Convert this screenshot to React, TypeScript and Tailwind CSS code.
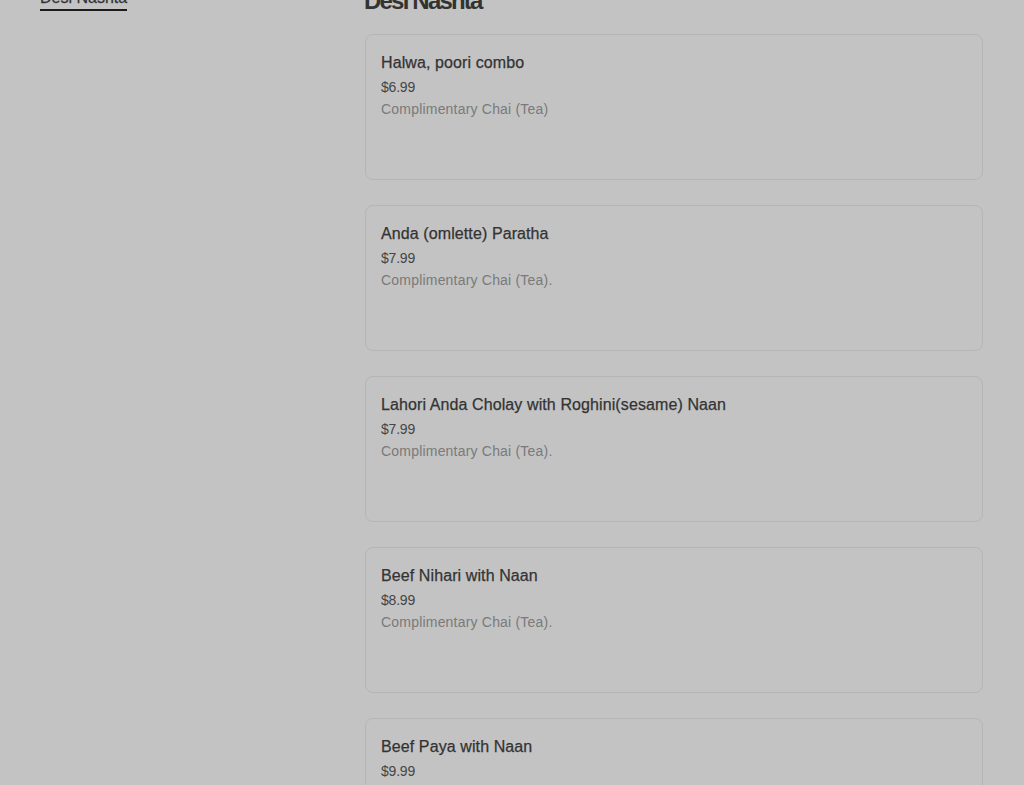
import React from 'react';

interface MenuItem {
  name: string;
  price: string;
  description?: string;
}

const ITEMS: MenuItem[] = [
  { name: 'Halwa, poori combo', price: '$6.99', description: 'Complimentary Chai (Tea)' },
  { name: 'Anda (omlette) Paratha', price: '$7.99', description: 'Complimentary Chai (Tea).' },
  { name: 'Lahori Anda Cholay with Roghini(sesame) Naan', price: '$7.99', description: 'Complimentary Chai (Tea).' },
  { name: 'Beef Nihari with Naan', price: '$8.99', description: 'Complimentary Chai (Tea).' },
  { name: 'Beef Paya with Naan', price: '$9.99', description: 'Complimentary Chai (Tea).' },
];

const ItemCard: React.FC<{ item: MenuItem }> = ({ item }) => (
  <div className="h-[146px] shrink-0 rounded-lg border border-[#b5b5b5] px-[15px] pt-4">
    <div className="text-base leading-6 font-medium tracking-[0.1px] text-[#333333] [-webkit-text-stroke:0.25px_#333333]">
      {item.name}
    </div>
    <div className="mt-px text-sm leading-[22px] tracking-[-0.2px] text-[#454545]">{item.price}</div>
    {item.description && (
      <div className="text-sm leading-[22px] tracking-[0.2px] text-[#7a7a7a]">{item.description}</div>
    )}
  </div>
);

export default function App() {
  return (
    <div
      className="h-screen overflow-hidden bg-[#c3c3c3]"
      style={{ fontFamily: '"Liberation Sans", Arial, sans-serif' }}
    >
      <div className="flex px-10 -mt-[15px]">
        {/* Category nav */}
        <aside className="w-[324px] shrink-0 pt-px">
          <a
            href="#desi-nashta"
            className="inline-block border-b-2 border-[#1c1c1c] text-base leading-[23px] font-medium text-[#333333] [-webkit-text-stroke:0.25px_#333333]"
          >
            Desi Nashta
          </a>
        </aside>

        {/* Menu section */}
        <main className="flex-1">
          <h2 className="text-2xl leading-8 font-bold tracking-[-1.8px] text-[#333333]">Desi Nashta</h2>
          <div className="mt-[17px] flex flex-col gap-[25px] px-px">
            {ITEMS.map((item) => (
              <ItemCard key={item.name} item={item} />
            ))}
          </div>
        </main>
      </div>
    </div>
  );
}
